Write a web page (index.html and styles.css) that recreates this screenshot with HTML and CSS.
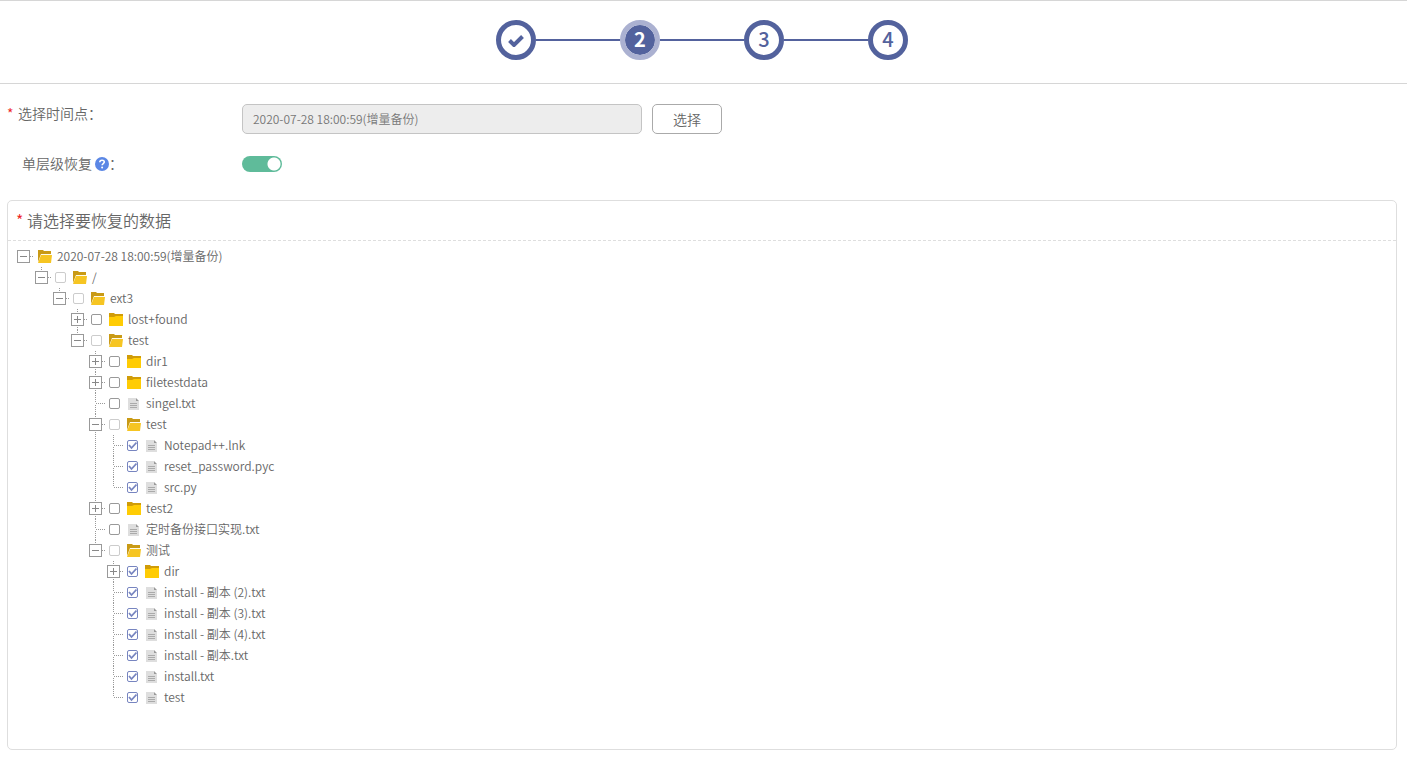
FILE: index.html
```html
<!DOCTYPE html>
<html lang="zh-CN">
<head>
    <meta charset="utf-8">
    <title>恢复数据</title>
    <link rel="stylesheet" href="styles.css">
</head>
<body>
    <svg class="sprite" aria-hidden="true">
        <symbol id="folder" viewBox="0 0 14 13">
            <path d="M0 0h5l1 1h8v4H0z" fill="#d09c08"/>
            <path d="M0 4h5l2-1h7v10H0z" fill="#ffcc04"/>
        </symbol>
        <symbol id="folderOpen" viewBox="0 0 14 13">
            <path d="M0 0h5l1 1h7v3H3L0 12z" fill="#c99a15"/>
            <path d="M3 5h11l-1 8H0z" fill="#f6c522"/>
            <path d="M3 4h10v1H3z" fill="#fffbe8"/>
        </symbol>
        <symbol id="file" viewBox="0 0 14 13">
            <path d="M1 1h8v3h3v9H1z" fill="#dedede"/>
            <path d="M9 1l3 3H9z" fill="#999"/>
            <path d="M3 6h7v1H3zM3 8h7v1H3zM3 10h7v1H3z" fill="#aaa"/>
        </symbol>
    </svg>

    <div class="steps">
        <div class="step done">
            <svg width="16" height="12" viewBox="0 0 16 12"><path d="M1.500 5.500L6 10L14.500 1.500" fill="none" stroke="#53629d" stroke-width="4"/></svg>
        </div>
        <div class="line"></div>
        <div class="step active">2</div>
        <div class="line"></div>
        <div class="step">3</div>
        <div class="line"></div>
        <div class="step">4</div>
    </div>

    <form class="form">
        <div class="form-row">
            <label for="timepoint"><span class="star">*</span>选择时间点：</label>
            <input type="text" id="timepoint" class="timepoint" value="2020-07-28 18:00:59(增量备份)" readonly>
            <button type="button" class="choose">选择</button>
        </div>
        <div class="form-row">
            <label for="single" class="plain">单层级恢复
                <svg class="help" width="14" height="14" viewBox="0 0 14 14"><circle cx="7" cy="7" r="7" fill="#5b87e5"/><path d="M4.800 5.300C4.800 2.500 9.300 2.600 9.300 5.100C9.300 6.600 7.100 6.600 7.100 8.300" fill="none" stroke="#fff" stroke-width="1.600"/><circle cx="7.100" cy="10.500" r="1" fill="#fff"/></svg>：</label>
            <input type="checkbox" id="single" class="toggle" checked>
        </div>
    </form>

    <div class="panel">
        <div class="panel-title"><span class="star">*</span>请选择要恢复的数据</div>
        <ul class="tree">
            <li>
                <div class="node"><span class="slot"><button class="switch" aria-label="收起"></button></span><svg class="icon"><use href="#folderOpen"/></svg><span class="name">2020-07-28 18:00:59(增量备份)</span></div>
                <ul>
                    <li>
                        <div class="node"><span class="slot"><button class="switch" aria-label="收起"></button></span><input type="checkbox" id="n1" class="check" disabled><svg class="icon"><use href="#folderOpen"/></svg><label class="name" for="n1">/</label></div>
                        <ul>
                            <li>
                                <div class="node"><span class="slot"><button class="switch" aria-label="收起"></button></span><input type="checkbox" id="n2" class="check" disabled><svg class="icon"><use href="#folderOpen"/></svg><label class="name" for="n2">ext3</label></div>
                                <ul>
                                    <li>
                                        <div class="node"><span class="slot"><button class="switch plus" aria-label="展开"></button></span><input type="checkbox" id="n3" class="check"><svg class="icon"><use href="#folder"/></svg><label class="name" for="n3">lost+found</label></div>
                                    </li>
                                    <li>
                                        <div class="node"><span class="slot"><button class="switch" aria-label="收起"></button></span><input type="checkbox" id="n4" class="check" disabled><svg class="icon"><use href="#folderOpen"/></svg><label class="name" for="n4">test</label></div>
                                        <ul>
                                            <li>
                                                <div class="node"><span class="slot"><button class="switch plus" aria-label="展开"></button></span><input type="checkbox" id="n5" class="check"><svg class="icon"><use href="#folder"/></svg><label class="name" for="n5">dir1</label></div>
                                            </li>
                                            <li>
                                                <div class="node"><span class="slot"><button class="switch plus" aria-label="展开"></button></span><input type="checkbox" id="n6" class="check"><svg class="icon"><use href="#folder"/></svg><label class="name" for="n6">filetestdata</label></div>
                                            </li>
                                            <li>
                                                <div class="node"><span class="slot leaf"></span><input type="checkbox" id="n7" class="check"><svg class="icon"><use href="#file"/></svg><label class="name" for="n7">singel.txt</label></div>
                                            </li>
                                            <li>
                                                <div class="node"><span class="slot"><button class="switch" aria-label="收起"></button></span><input type="checkbox" id="n8" class="check" disabled><svg class="icon"><use href="#folderOpen"/></svg><label class="name" for="n8">test</label></div>
                                                <ul>
                                                    <li>
                                                        <div class="node"><span class="slot leaf"></span><input type="checkbox" id="n9" class="check" checked><svg class="icon"><use href="#file"/></svg><label class="name" for="n9">Notepad++.lnk</label></div>
                                                    </li>
                                                    <li>
                                                        <div class="node"><span class="slot leaf"></span><input type="checkbox" id="n10" class="check" checked><svg class="icon"><use href="#file"/></svg><label class="name" for="n10">reset_password.pyc</label></div>
                                                    </li>
                                                    <li>
                                                        <div class="node"><span class="slot leaf"></span><input type="checkbox" id="n11" class="check" checked><svg class="icon"><use href="#file"/></svg><label class="name" for="n11">src.py</label></div>
                                                    </li>
                                                </ul>
                                            </li>
                                            <li>
                                                <div class="node"><span class="slot"><button class="switch plus" aria-label="展开"></button></span><input type="checkbox" id="n12" class="check"><svg class="icon"><use href="#folder"/></svg><label class="name" for="n12">test2</label></div>
                                            </li>
                                            <li>
                                                <div class="node"><span class="slot leaf"></span><input type="checkbox" id="n13" class="check"><svg class="icon"><use href="#file"/></svg><label class="name" for="n13">定时备份接口实现.txt</label></div>
                                            </li>
                                            <li>
                                                <div class="node"><span class="slot"><button class="switch" aria-label="收起"></button></span><input type="checkbox" id="n14" class="check" disabled><svg class="icon"><use href="#folderOpen"/></svg><label class="name" for="n14">测试</label></div>
                                                <ul>
                                                    <li>
                                                        <div class="node"><span class="slot"><button class="switch plus" aria-label="展开"></button></span><input type="checkbox" id="n15" class="check" checked><svg class="icon"><use href="#folder"/></svg><label class="name" for="n15">dir</label></div>
                                                    </li>
                                                    <li>
                                                        <div class="node"><span class="slot leaf"></span><input type="checkbox" id="n16" class="check" checked><svg class="icon"><use href="#file"/></svg><label class="name" for="n16">install - 副本 (2).txt</label></div>
                                                    </li>
                                                    <li>
                                                        <div class="node"><span class="slot leaf"></span><input type="checkbox" id="n17" class="check" checked><svg class="icon"><use href="#file"/></svg><label class="name" for="n17">install - 副本 (3).txt</label></div>
                                                    </li>
                                                    <li>
                                                        <div class="node"><span class="slot leaf"></span><input type="checkbox" id="n18" class="check" checked><svg class="icon"><use href="#file"/></svg><label class="name" for="n18">install - 副本 (4).txt</label></div>
                                                    </li>
                                                    <li>
                                                        <div class="node"><span class="slot leaf"></span><input type="checkbox" id="n19" class="check" checked><svg class="icon"><use href="#file"/></svg><label class="name" for="n19">install - 副本.txt</label></div>
                                                    </li>
                                                    <li>
                                                        <div class="node"><span class="slot leaf"></span><input type="checkbox" id="n20" class="check" checked><svg class="icon"><use href="#file"/></svg><label class="name" for="n20">install.txt</label></div>
                                                    </li>
                                                    <li>
                                                        <div class="node"><span class="slot leaf"></span><input type="checkbox" id="n21" class="check" checked><svg class="icon"><use href="#file"/></svg><label class="name" for="n21">test</label></div>
                                                    </li>
                                                </ul>
                                            </li>
                                        </ul>
                                    </li>
                                </ul>
                            </li>
                        </ul>
                    </li>
                </ul>
            </li>
        </ul>
    </div>
</body>
</html>
```
FILE: styles.css
```css
*{
    box-sizing: border-box;
}
body{
    margin: 0;
    background-color: #fff;
    color: #666;
    font-family: "Noto Sans CJK SC", sans-serif;
    font-size: 12px;
    font-weight: 350;
}
input,button{
    font-family: inherit;
    font-weight: inherit;
    margin: 0;
}
.sprite{
    display: none;
}

/* wizard steps */
.steps{
    display: flex;
    justify-content: center;
    align-items: center;
    padding: 19px 3px 23px 0;
    border-top: 1px solid #d6d6d6;
    border-bottom: 1px solid #d6d6d6;
}
.step{
    display: flex;
    align-items: center;
    justify-content: center;
    width: 40px;
    height: 40px;
    border: 5px solid #53629d;
    border-radius: 50%;
    color: #53629d;
    font-size: 20px;
    font-weight: 500;
    line-height: 28px;
    padding-bottom: 2px;
}
.step.done{
    padding: 2px 0 0;
}
.step.active{
    background-color: #53629d;
    background-clip: padding-box;
    border-color: #abb1d1;
    color: #fff;
    font-weight: 700;
}
.line{
    width: 84px;
    height: 2px;
    background-color: #53629d;
}

/* form */
.form{
    padding: 20px 7px 0;
}
.form-row{
    display: flex;
    align-items: flex-start;
    height: 50px;
}
.form-row label{
    display: flex;
    align-items: center;
    width: 235px;
    font-size: 14px;
    line-height: 18px;
}
.form-row .plain{
    padding-left: 15px;
}
.star{
    width: 11px;
    color: #e22;
}
.help{
    margin: 2px 0 0 3px;
}
.timepoint{
    width: 400px;
    height: 30px;
    padding: 0 10px 2px;
    border: 1px solid #c4c4c4;
    border-radius: 5px;
    background-color: #ededed;
    color: #777;
    font-size: 12px;
}
.choose{
    width: 70px;
    height: 30px;
    margin-left: 10px;
    padding: 0;
    border: 1px solid #aaa;
    border-radius: 5px;
    background-color: #fff;
    color: #666;
    font-size: 14px;
    cursor: pointer;
}
.toggle{
    appearance: none;
    width: 40px;
    height: 16px;
    margin-top: 2px;
    border-radius: 8px;
    background: radial-gradient(circle at 32px 8px, #fff 6px, #5fbb9a 7px);
    cursor: pointer;
}

/* data panel */
.panel{
    margin: -4px 10px 13px 7px;
    padding-bottom: 41px;
    border: 1px solid #dedede;
    border-radius: 5px;
}
.panel-title{
    display: flex;
    height: 40px;
    padding-left: 8px;
    border-bottom: 1px dashed #dedede;
    font-size: 16px;
    line-height: 39px;
}

/* tree */
.tree{
    padding: 5px 9px 0;
}
ul{
    margin: 0;
    padding: 0;
    list-style: none;
}
li ul{
    padding-left: 18px;
}
li li{
    background: repeating-linear-gradient(to bottom, #999 0 1px, #fff 1px 2px) 6px 0 / 1px 100% no-repeat;
}
li li:last-child{
    background-size: 1px 11px;
}
.node{
    display: flex;
    align-items: center;
    height: 21px;
}
.name{
    padding-bottom: 2px;
    line-height: 19px;
}
.slot{
    display: flex;
    width: 17px;
    background: repeating-linear-gradient(to right, #fff 0 1px, #999 1px 2px) 0 6px / 100% 1px no-repeat;
}
.leaf{
    height: 1px;
    margin-left: 6px;
    width: 11px;
    background-position: 0 0;
}
.switch{
    width: 13px;
    height: 13px;
    padding: 0;
    border: 1px solid #999;
    background: linear-gradient(#888, #888) center / 7px 1px no-repeat #fff;
    cursor: pointer;
}
.plus{
    background: linear-gradient(#888, #888) center / 7px 1px no-repeat, linear-gradient(#888, #888) center / 1px 7px no-repeat #fff;
}
.check{
    appearance: none;
    width: 11px;
    height: 11px;
    margin: 0 3px;
    border: 1px solid #999;
    border-radius: 2px;
    background-color: #fff;
}
.check:disabled{
    border-color: #ccc;
}
.check:checked{
    border-color: #7785c0;
    background: url("data:image/svg+xml,%3Csvg xmlns='http://www.w3.org/2000/svg' viewBox='0 0 9 9'%3E%3Cpath d='M1 4l2.500 3L8.500 1.500' fill='none' stroke='%237785c0' stroke-width='1.800'/%3E%3C/svg%3E") center / 9px 9px no-repeat;
}
.icon{
    width: 14px;
    height: 13px;
    margin: 0 5px 0 4px;
}
```
